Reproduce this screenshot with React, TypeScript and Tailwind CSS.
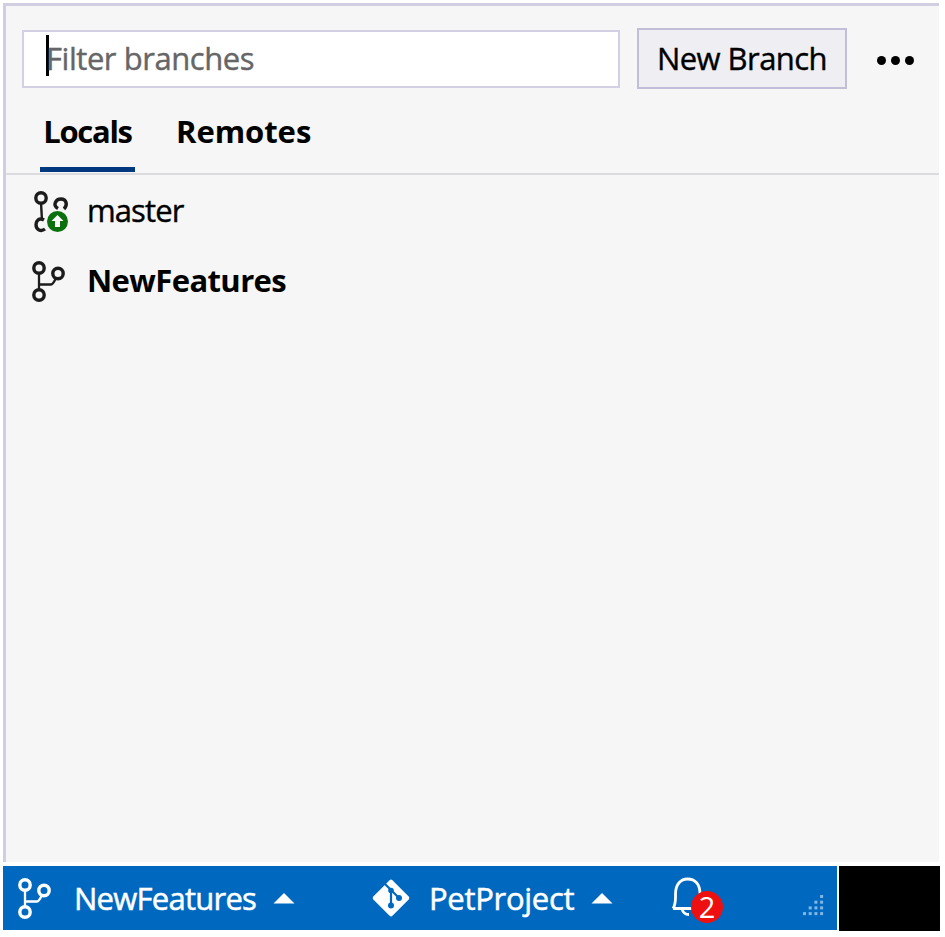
import React from "react";

function BranchIcon({ className }: { className: string }) {
  return (
    <svg className={className} width="36" height="44" viewBox="0 0 36 44" fill="none" stroke="currentColor">
      <g strokeWidth="3.400">
        <circle cx="8" cy="9" r="5.200" />
        <circle cx="8" cy="36" r="5.200" />
        <circle cx="27" cy="14.500" r="5.200" />
      </g>
      <path d="M8 14V31M9 25.500H20Q22 25.500 25 19" strokeWidth="2.300" />
    </svg>
  );
}

function OutgoingBranchIcon() {
  return (
    <svg className="shrink-0" width="40" height="44" viewBox="0 0 40 44" fill="none">
      <g stroke="#1c1c1c" strokeWidth="3.400">
        <circle cx="9" cy="9" r="5.200" />
        <path d="M9 14L10 31" strokeWidth="2.400" />
        <path d="M12 31C7 28 4 32 4 35.500C4 41 9 43 13 40" />
        <path d="M26 19.500C20 16 24 10 29 10C34.500 10 36 16 32 20" />
      </g>
      <circle cx="25.500" cy="32.500" r="10.500" fill="#0b700e" />
      <path d="M25.500 26L31.500 32H28V38H23V32H19.500Z" fill="#fff" />
    </svg>
  );
}

function GitIcon() {
  return (
    <svg className="shrink-0" width="40" height="40" viewBox="0 0 40 40" fill="none">
      <rect x="6.500" y="6.500" width="27" height="27" rx="2" transform="rotate(45 20 20)" fill="#fff" />
      <path d="M13 5L20 12V27M20 12L28 20" stroke="#0069bf" strokeWidth="2.200" />
      <g fill="#0069bf">
        <circle cx="20" cy="12.500" r="2.800" />
        <circle cx="20" cy="27.500" r="3" />
        <circle cx="28" cy="20" r="3" />
      </g>
    </svg>
  );
}

function BellIcon() {
  return (
    <svg width="36" height="42" viewBox="0 0 36 42" fill="none" stroke="#fff" strokeWidth="2.800">
      <path d="M2 31.500H31M2 31.500C5 27 4.500 23 4.500 17C4.500 7 10 2 16.500 2C24 2 29 7 29 17C29 23 29 27 31 31.500M11 32C12 36 14 37.500 18 37.500" />
    </svg>
  );
}

function Caret() {
  return (
    <svg className="shrink-0" width="22" height="12" viewBox="0 0 22 12">
      <path d="M11 1L21.500 11.500H0.500Z" fill="#fff" />
    </svg>
  );
}

function ResizeGrip() {
  const dots = [];
  for (let row = 0; row < 4; row++) {
    for (let col = 3 - row; col < 4; col++) {
      dots.push(<rect key={row + "-" + col} x={col * 5.7} y={row * 5.7} width="3" height="3" />);
    }
  }
  return (
    <svg width="21" height="21" viewBox="0 0 21 21" fill="#80b7e5">
      {dots}
    </svg>
  );
}

export default function App() {
  return (
    <div className="h-[937px] w-[945px] overflow-hidden bg-white pl-[3px] pt-[3px] font-['Open_Sans','Noto_Sans',sans-serif] text-[31px] font-medium leading-[44px] text-black whitespace-nowrap">
      <section className="flex h-[859px] w-[936px] flex-col border-l-[3px] border-t-[3px] border-[#d0cee0] bg-[#f6f6f6]">
        <div className="flex h-[83px] shrink-0 items-end">
          <div className="mb-px ml-[16px] flex h-[58px] w-[598px] items-center border-2 border-[#d2d0e2] bg-white pl-[22px]">
            <span className="h-[41px] w-[3px] -translate-y-[4px] bg-black" />
            <span className="-ml-[3px] -translate-y-px tracking-[-0.45px] text-[#666] [-webkit-text-stroke:0.4px]">Filter branches</span>
          </div>
          <button className="ml-[17px] flex h-[61px] w-[210px] items-center justify-center border-[2px] border-[#c0bed8] bg-[#eeeef3] tracking-[-0.55px]">
            <span className="-translate-y-px [-webkit-text-stroke:0.4px]">New Branch</span>
          </button>
          <div className="mb-[24px] ml-[30px] flex gap-[5px]">
            <span className="size-[9px] rounded-full bg-black" />
            <span className="size-[9px] rounded-full bg-black" />
            <span className="size-[9px] rounded-full bg-black" />
          </div>
        </div>
        <nav className="flex h-[86px] shrink-0 border-b-2 border-[#dcdce0] pl-[34px] font-bold">
          <div className="flex h-[83px] w-[95px] items-center justify-center border-b-[5px] border-[#003880] pt-[6px]">
            <span className="tracking-[-1.3px]">Locals</span>
          </div>
          <div className="ml-[41px] flex h-[78px] items-center pt-[6px]">
            <span className="tracking-[-0.05px]">Remotes</span>
          </div>
        </nav>
        <div className="mt-[14px] flex h-[44px] items-center">
          <div className="ml-[26px] w-[55px]">
            <OutgoingBranchIcon />
          </div>
          <span className="-translate-y-px tracking-[-0.9px] [-webkit-text-stroke:0.4px]">master</span>
        </div>
        <div className="mt-[26px] flex h-[44px] items-center font-bold">
          <div className="ml-[25px] w-[56px]">
            <BranchIcon className="text-[#1c1c1c]" />
          </div>
          <span className="-translate-y-px tracking-[-0.6px]">NewFeatures</span>
        </div>
      </section>
      <footer className="mt-[4px] flex h-[65px] w-[937px] text-white">
        <div className="flex h-[64px] w-[834px] items-center bg-[#0069bf]">
          <BranchIcon className="ml-[14px] shrink-0" />
          <span className="ml-[21px] w-[199px] tracking-[-0.75px] [-webkit-text-stroke:0.5px]">NewFeatures</span>
          <Caret />
          <div className="ml-[76px] w-[58px]">
            <GitIcon />
          </div>
          <span className="w-[162px] tracking-[-0.3px] [-webkit-text-stroke:0.5px]">PetProject</span>
          <Caret />
          <div className="relative ml-[58px] w-[132px]">
            <BellIcon />
            <span className="absolute left-[20px] top-[14px] flex size-[32px] items-center justify-center rounded-full bg-[#ee1010] text-[29px]">2</span>
          </div>
          <div className="mt-[14px]">
            <ResizeGrip />
          </div>
        </div>
        <div className="ml-[2px] w-[101px] bg-black" />
      </footer>
    </div>
  );
}
